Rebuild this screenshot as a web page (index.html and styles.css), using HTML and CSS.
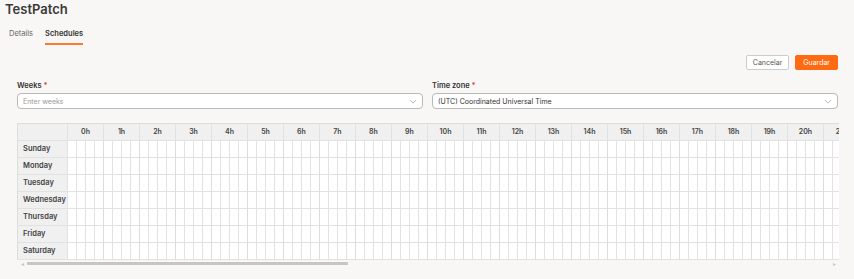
FILE: index.html
```html
<!DOCTYPE html>
<html>
<head>
    <title>TestPatch - Schedules</title>
    <link rel="stylesheet" href="styles.css">
</head>
<body>
    <h1 class="page-title">TestPatch</h1>

    <div class="tabs">
        <span class="tab">Details</span>
        <span class="tab active">Schedules</span>
    </div>

    <div class="content">
        <div class="actions">
            <button type="button" class="btn btn-secondary">Cancelar</button>
            <button type="button" class="btn btn-primary">Guardar</button>
        </div>

        <div class="fields">
            <div class="form-group">
                <label>Weeks <span class="req">*</span></label>
                <div class="select">
                    <span class="placeholder">Enter weeks</span>
                    <svg class="chevron" viewBox="0 0 10 6"><path d="M1 1l4 4 4-4"/></svg>
                </div>
            </div>
            <div class="form-group">
                <label>Time zone <span class="req">*</span></label>
                <div class="select">
                    <span class="value">(UTC) Coordinated Universal Time</span>
                    <svg class="chevron" viewBox="0 0 10 6"><path d="M1 1l4 4 4-4"/></svg>
                </div>
            </div>
        </div>

        <div class="schedule-wrap">
            <div class="schedule" id="schedule"></div>
        </div>
        <div class="scrollbar">
            <span class="arrow">&#9666;</span>
            <div class="track"><div class="thumb"></div></div>
            <span class="arrow">&#9656;</span>
        </div>
    </div>

    <script>
        const days = ['Sunday', 'Monday', 'Tuesday', 'Wednesday', 'Thursday', 'Friday', 'Saturday'];
        const grid = document.getElementById('schedule');
        let html = '<div class="corner"></div>';
        for (let h = 0; h < 24; h++) {
            html += `<div class="hour">${h}h</div>`;
        }
        days.forEach(day => {
            html += `<div class="day">${day}</div>`;
            for (let i = 0; i < 96; i++) {
                html += `<div class="slot${i % 4 === 3 ? ' hour-end' : ''}"></div>`;
            }
        });
        grid.innerHTML = html;
    </script>
</body>
</html>
```

FILE: styles.css
```css
body {
    margin: 0;
    background-color: #f8f7f5;
    font-family: Inter, "Noto Sans", sans-serif;
    color: #333;
}
.page-title {
    margin: 0;
    padding: 1px 5px 0;
    font-size: 13px;
    font-weight: 600;
    line-height: 17px;
    color: #3a3a3a;
}
.tabs {
    display: flex;
    gap: 12px;
    padding: 11px 9px 0;
}
.tab {
    font-size: 7.5px;
    line-height: 10px;
    color: #666;
    padding-bottom: 4px;
    border-bottom: 2px solid transparent;
}
.tab.active {
    color: #333;
    font-weight: 600;
    border-bottom-color: #ff7a2f;
}
.content {
    padding: 0 16px 0 17px;
}
.actions {
    display: flex;
    justify-content: flex-end;
    gap: 6px;
    margin-top: 10px;
}
.btn {
    font-family: inherit;
    font-size: 7px;
    height: 15px;
    padding: 0 6px;
    border-radius: 2px;
    cursor: pointer;
}
.btn-secondary {
    background-color: #fff;
    border: 1px solid #ccc;
    color: #555;
}
.btn-primary {
    background-color: #ff6a13;
    border: 1px solid #ff6a13;
    color: #fff;
    padding: 0 7px;
}
.fields {
    display: grid;
    grid-template-columns: 1fr 1fr;
    column-gap: 9px;
    margin-top: 11px;
}
.form-group label {
    display: block;
    font-size: 7.5px;
    font-weight: 600;
    line-height: 10px;
    color: #333;
    margin-bottom: 2px;
}
.req {
    color: #e53935;
}
.select {
    display: flex;
    align-items: center;
    justify-content: space-between;
    height: 16px;
    box-sizing: border-box;
    border: 1px solid #b9b9b9;
    border-radius: 4px;
    background-color: #fff;
    padding: 0 5px 0 5px;
    font-size: 7px;
}
.placeholder {
    color: #999;
}
.value {
    color: #333;
}
.chevron {
    width: 8px;
    height: 5px;
    fill: none;
    stroke: #aaa;
    stroke-width: 1;
}
.schedule-wrap {
    margin-top: 14px;
    width: 822px;
    overflow: hidden;
}
.schedule {
    display: grid;
    grid-template-columns: 50px repeat(96, 9px);
    grid-auto-rows: 17px;
    width: 914px;
    border-top: 1px solid #ddd;
    border-left: 1px solid #ddd;
    box-sizing: border-box;
}
.schedule > div {
    box-sizing: border-box;
    border-right: 1px solid #e2e2e2;
    border-bottom: 1px solid #e2e2e2;
}
.corner {
    background-color: #f0f0f0;
}
.hour {
    grid-column: span 4;
    background-color: #f0f0f0;
    font-size: 7px;
    font-weight: 600;
    color: #444;
    text-align: center;
    line-height: 16px;
    border-color: #dcdcdc;
}
.day {
    background-color: #f0f0f0;
    font-size: 7.5px;
    font-weight: 600;
    color: #444;
    line-height: 16px;
    padding-left: 5px;
}
.slot {
    background-color: #fff;
}
.slot.hour-end {
    border-right-color: #dcdcdc;
}
.scrollbar {
    display: flex;
    align-items: center;
    width: 822px;
    height: 5px;
    margin-top: 1px;
}
.arrow {
    width: 10px;
    font-size: 6px;
    line-height: 5px;
    color: #c6c6c6;
    text-align: center;
}
.track {
    flex: 1;
    height: 3px;
}
.thumb {
    width: 40%;
    height: 100%;
    background-color: #c6c6c6;
}
```
